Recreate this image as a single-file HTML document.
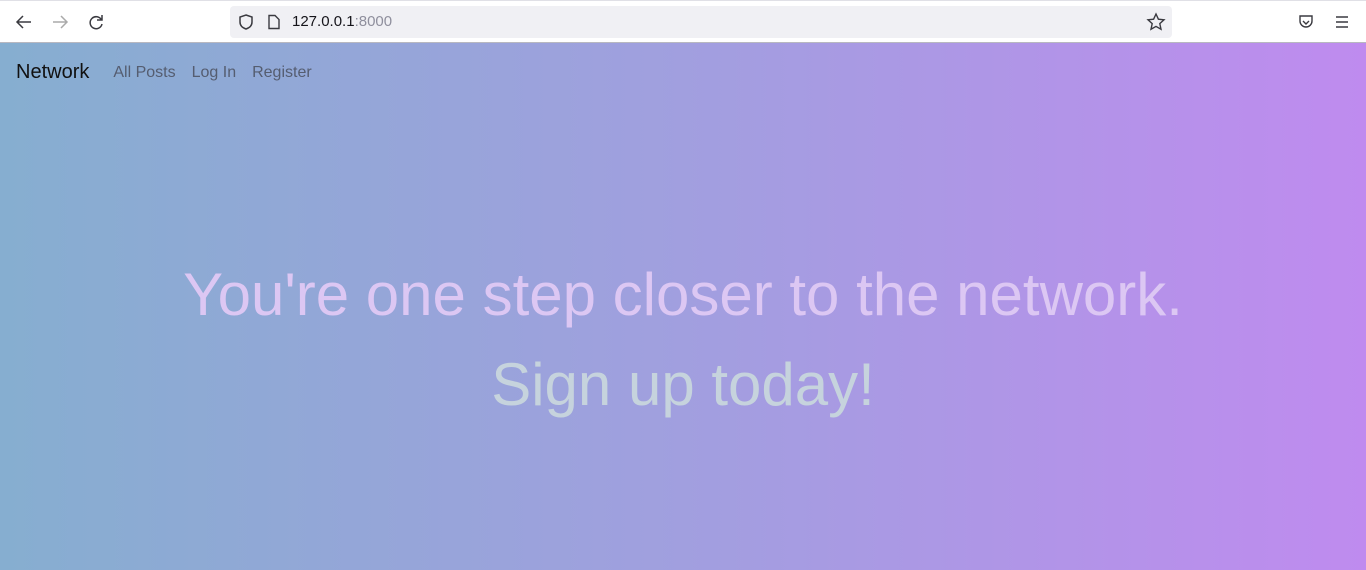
<!DOCTYPE html>
<html><head><style>
*{margin:0;padding:0;box-sizing:border-box}
body{width:1366px;height:570px;overflow:hidden;font-family:"Liberation Sans",sans-serif;background:#fff}
.bar{height:43px;background:#fff;border-top:1px solid #e0e0e6;position:relative;border-bottom:1px solid #b8b8c0}
.url{position:absolute;left:230px;top:5px;width:942px;height:32px;background:#f0f0f4;border-radius:4px}
.url span{position:absolute;left:62px;top:7px;font-size:15px;color:#15141a}
.url span i{font-style:normal;color:#8f8f9d}
svg{position:absolute}
.main{height:527px;background:linear-gradient(90deg,#86aed0 0%,#a19fdf 50%,#bf8bef 100%);position:relative}
.nav{position:absolute;top:17px;left:16px;font-size:16px;color:#555d70}
.nav b{font-weight:normal;font-size:20px;color:#111;margin-right:24px;position:relative;top:1px}
.nav a{margin-right:16px}
h1{position:absolute;top:217px;width:100%;text-align:center;font-weight:normal;font-size:60px;color:#dcc7f3}
h2{position:absolute;top:307px;width:100%;text-align:center;font-weight:normal;font-size:60px;color:#c6d3dd}
</style></head><body>
<div class="bar">
<svg width="20" height="20" style="left:14px;top:11px" viewBox="0 0 20 20"><path d="M17 10H4M9 4l-6 6 6 6" fill="none" stroke="#3a3a40" stroke-width="1.5"/></svg>
<svg width="20" height="20" style="left:50px;top:11px" viewBox="0 0 20 20"><path d="M3 10h13M11 4l6 6-6 6" fill="none" stroke="#aaa" stroke-width="1.5"/></svg>
<svg width="20" height="20" style="left:86px;top:11px" viewBox="0 0 20 20"><path d="M15.5 8A6 6 0 1 0 16 12M16 3v5h-5" fill="none" stroke="#3a3a40" stroke-width="1.5"/></svg>
<div class="url">
<svg width="18" height="18" style="left:7px;top:7px" viewBox="0 0 18 18"><path d="M9 2l6 2v5c0 4-3 6-6 7-3-1-6-3-6-7V4z" fill="none" stroke="#3a3a40" stroke-width="1.5"/></svg>
<svg width="16" height="16" style="left:36px;top:8px" viewBox="0 0 16 16"><path d="M3 1.5h6l4 4v9H3z" fill="none" stroke="#3a3a40" stroke-width="1.4"/></svg>
<span>127.0.0.1<i>:8000</i></span>
<svg width="20" height="20" style="left:916px;top:6px" viewBox="0 0 20 20"><path d="M10 2l2.4 5.2 5.6.6-4.2 3.8 1.2 5.6L10 14.4 5 17.2l1.2-5.6L2 7.8l5.6-.6z" fill="none" stroke="#3a3a40" stroke-width="1.4"/></svg>
</div>
<svg width="18" height="18" style="left:1297px;top:12px" viewBox="0 0 18 18"><path d="M3 3h12v5a6 6 0 0 1-12 0z" fill="none" stroke="#3a3a40" stroke-width="1.4"/><path d="M6 8l3 3 3-3" fill="none" stroke="#3a3a40" stroke-width="1.4"/></svg>
<svg width="16" height="16" style="left:1334px;top:13px" viewBox="0 0 16 16"><path d="M2 3h12M2 8h12M2 13h12" stroke="#3a3a40" stroke-width="1.4"/></svg>
</div>
<div class="main">
<div class="nav"><b>Network</b><a>All Posts</a><a>Log In</a><a>Register</a></div>
<h1>You're one step closer to the network.</h1>
<h2>Sign up today!</h2>
</div>
</body></html>
